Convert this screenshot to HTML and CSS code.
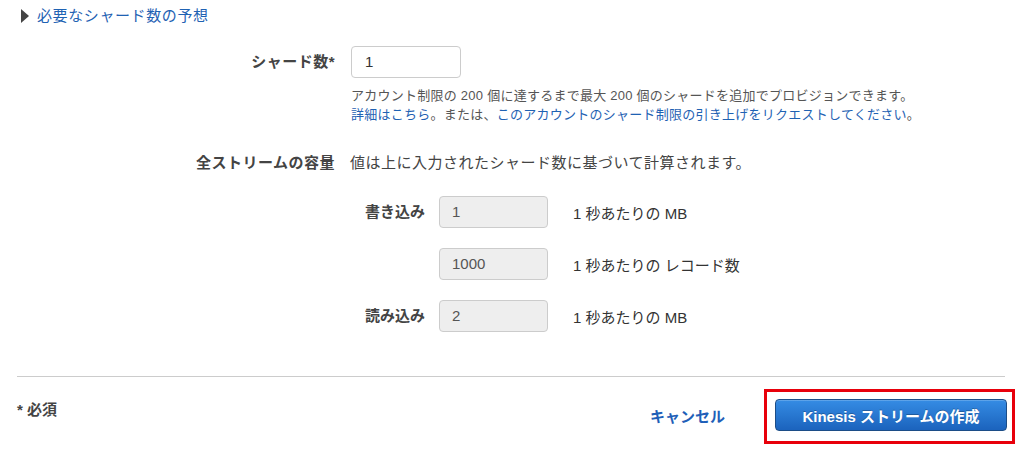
FILE: index.html
```html
<!DOCTYPE html>
<html lang="ja">
<head>
<meta charset="utf-8">
<title>Kinesis ストリームの作成</title>
<link rel="stylesheet" href="styles.css">
</head>
<body>
<div class="page">
  <div class="toggle">
    <span class="tri"></span>
    <a class="link" href="#">必要なシャード数の予想</a>
  </div>

  <div class="row shard-row">
    <label class="lbl">シャード数*</label>
    <div class="field">
      <div class="input">1</div>
      <p class="help">アカウント制限の 200 個に達するまで最大 200 個のシャードを追加でプロビジョンできます。<br><a class="link" href="#">詳細はこちら</a>。または、<a class="link" href="#">このアカウントのシャード制限の引き上げをリクエストしてください</a>。</p>
    </div>
  </div>

  <div class="row cap-row">
    <label class="lbl">全ストリームの容量</label>
    <div class="cap-note">値は上に入力されたシャード数に基づいて計算されます。</div>
  </div>

  <div class="cap-grid">
    <span class="sublbl">書き込み</span>
    <div class="input ro">1</div>
    <span class="unit">1 秒あたりの MB</span>

    <span class="sublbl"></span>
    <div class="input ro">1000</div>
    <span class="unit">1 秒あたりの レコード数</span>

    <span class="sublbl">読み込み</span>
    <div class="input ro">2</div>
    <span class="unit">1 秒あたりの MB</span>
  </div>

  <div class="divider"></div>

  <div class="footer">
    <span class="required">* 必須</span>
    <a class="cancel" href="#">キャンセル</a>
    <div class="highlight">
      <button class="primary" type="button">Kinesis ストリームの作成</button>
    </div>
  </div>
</div>
</body>
</html>
```

FILE: styles.css
```css
* { box-sizing: border-box; }

body {
  margin: 0;
  background: #fff;
  font-family: "Liberation Sans", "Noto Sans CJK JP", sans-serif;
  color: #333;
}

.page {
  width: 1023px;
  height: 450px;
  overflow: hidden;
}

.link {
  color: #1f62b3;
  text-decoration: none;
}

.toggle {
  display: flex;
  align-items: center;
  margin-top: 5px;
  padding-left: 21px;
  height: 22px;
  font-size: 15px;
  line-height: 22px;
  letter-spacing: 0.6px;
}

.tri {
  width: 0;
  height: 0;
  border-left: 8px solid #444;
  border-top: 7px solid transparent;
  border-bottom: 7px solid transparent;
  margin-right: 8px;
}

.row {
  display: grid;
  grid-template-columns: 335px 1fr;
  column-gap: 16px;
  align-items: start;
}

.lbl {
  text-align: right;
  font-weight: bold;
  font-size: 15px;
  color: #444;
  white-space: nowrap;
  letter-spacing: 0.5px;
}

.shard-row {
  margin-top: 19px;
}

.shard-row .lbl {
  line-height: 32px;
}

.input {
  width: 110px;
  height: 32px;
  border: 1px solid #ccc;
  border-radius: 4px;
  background: #fff;
  padding-left: 13px;
  font-size: 15px;
  line-height: 30px;
  color: #333;
}

.help {
  margin: 8px 0 0;
  font-size: 13px;
  line-height: 19px;
  color: #555;
  white-space: nowrap;
  letter-spacing: 0.25px;
}

.cap-row {
  margin-top: 28px;
  line-height: 22px;
}

.cap-note {
  font-size: 15px;
  color: #444;
  margin-left: -1px;
  letter-spacing: 0.5px;
}

.cap-grid {
  margin-top: 22px;
  display: grid;
  grid-template-columns: 425px 109px auto;
  column-gap: 14px;
  row-gap: 20px;
  grid-auto-rows: 32px;
  align-items: center;
}

.sublbl {
  text-align: right;
  font-weight: bold;
  font-size: 15px;
  color: #444;
  line-height: 32px;
}

.input.ro {
  width: 109px;
  background: #eee;
  color: #555;
  padding-left: 12px;
}

.unit {
  margin-left: 11px;
  font-size: 15px;
  color: #333;
}

.divider {
  margin: 44px 18px 0 17px;
  height: 1px;
  background: #ccc;
}

.footer {
  margin-top: 12px;
  display: flex;
  align-items: center;
  padding-left: 17px;
  padding-right: 8px;
}

.required {
  align-self: flex-start;
  margin-top: 10px;
  margin-right: auto;
  font-size: 15px;
  line-height: 22px;
  font-weight: bold;
  color: #444;
}

.cancel {
  margin-right: 39px;
  font-size: 15px;
  font-weight: bold;
  color: #1f5fb8;
  text-decoration: none;
  line-height: 22px;
}

.highlight {
  border: 3px solid #e8000b;
  padding: 7px 4px 9px 8px;
  width: 251px;
  height: 55px;
}

.primary {
  display: block;
  width: 232px;
  height: 32px;
  margin: 0;
  padding: 0;
  border: 1px solid #1c4d87;
  border-radius: 4px;
  background: linear-gradient(#358ce4, #1b63bd);
  color: #fff;
  font-family: "Liberation Sans", "Noto Sans CJK JP", sans-serif;
  font-size: 15px;
  font-weight: bold;
  text-shadow: 0 -1px 0 rgba(0, 0, 0, 0.25);
  box-shadow: inset 0 1px 0 rgba(255, 255, 255, 0.2);
}
```
